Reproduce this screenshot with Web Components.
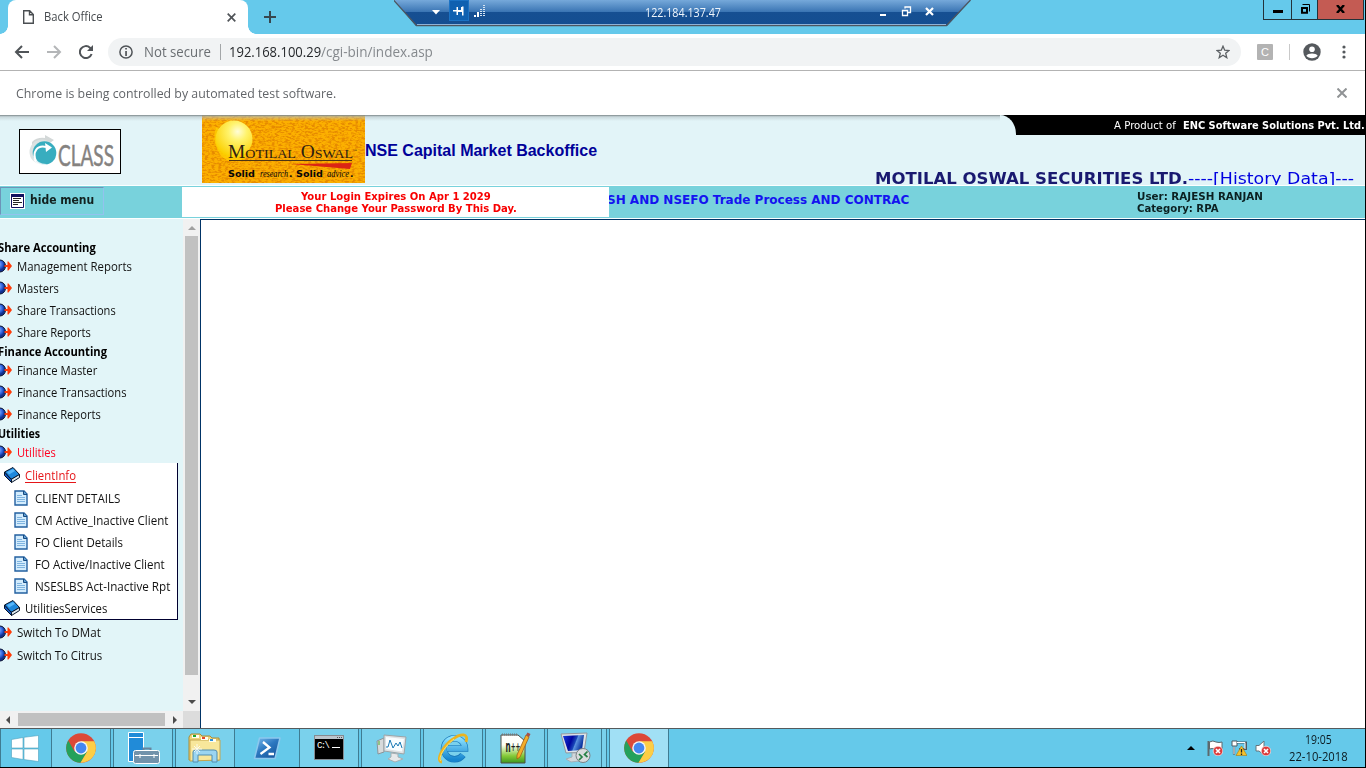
<!DOCTYPE html>
<html lang="en"><head><meta charset="utf-8"><title>Back Office</title>
<style>html,body{margin:0;height:100%;overflow:hidden;background:#000}</style></head>
<body><remote-desktop></remote-desktop>
<script>
const make = (name, html) => customElements.define(name, class extends HTMLElement {
  constructor() {
    super();
    this.attachShadow({mode: 'open'}).innerHTML = '<style>*{box-sizing:border-box}svg{display:block;flex:none}</style>' +
      (typeof html === 'function' ? html(this) : html);
  }
});

make('remote-desktop', `<style>
:host{display:flex;flex-direction:column;width:1366px;height:768px;border:solid #000;border-width:0 1px 1px 0;box-sizing:border-box;background:#fff;overflow:hidden;font:12px "Open Sans",sans-serif;color:#000;position:relative}
session-bar{position:absolute;left:394px;top:0}
</style>
<tab-strip></tab-strip><tool-bar></tool-bar><info-bar></info-bar><page-header></page-header><status-row></status-row><page-body></page-body><task-bar></task-bar><session-bar></session-bar>`);

make('session-bar', `<style>
:host{display:block;width:577px;height:27px;position:relative}
.bg{position:absolute;inset:0}
.pin{width:20px;height:21px;background:#0f60b0;border:1px solid #1b72c4;display:flex;align-items:center;justify-content:center}
</style>
<svg class="bg" width="577" height="27"><defs><linearGradient id="a" x2="0" y2="1"><stop offset="0" stop-color="#76a9da"/><stop offset=".46" stop-color="#3a74b3"/><stop offset=".461" stop-color="#164f92"/><stop offset="1" stop-color="#144e91"/></linearGradient></defs><path d="M0 0H577L553 26H22Z" fill="url(#a)"/><path d="M-.500 0L22.500 25.500H552.500L576.500 0" fill="none" stroke="#4d5660" stroke-width="1.3"/><path d="M23 24.500H552" stroke="#8fb2d6"/></svg>
<svg style="position:absolute;left:38px;top:10px" width="10" height="5"><path d="M0 0H8L4 4.500Z" fill="#fff"/></svg>
<div style="position:absolute;left:55px;top:0" class="pin"><svg style="margin-top:1px" width="12" height="12" fill="#fff"><path d="M0 5H3.500V2H5V5H8V2H9V1.500H10.500V10.500H9V7H5V10H3.500V6.500H0Z"/></svg></div>
<svg style="position:absolute;left:80px;top:5px" width="12" height="12" fill="#fff"><path d="M0 10h2v2H0zM3 7h2v5H3z"/><path fill="none" stroke="#d5e4f2" stroke-width="2" stroke-dasharray="1 1" d="M7 4V12M10 0V12"/></svg>
<fit-text w="76" style="position:absolute;left:251px;top:4px;line-height:18px;color:#eef5fc">122.184.137.47</fit-text>
<svg style="position:absolute;left:486px;top:6px" width="56" height="11"><path d="M0 8H6V10H0Z" fill="#fff"/><path d="M22.500 4.500H27.500V9.500H22.500ZM25 2.500V1H30.500V6.500H28" fill="none" stroke="#fff" stroke-width="1.300"/><path d="M46 2L53 9M53 2L46 9" stroke="#fff" stroke-width="2.200"/></svg>`);

make('tab-strip', `<style>
:host{display:flex;height:34px;background:#65c9eb;flex:none;position:relative}
.tab{position:relative;width:240px;height:34px;margin-left:8px;background:#fff;border-radius:8px 8px 0 0;display:flex;align-items:center;padding:0 10px 0 15px;color:#45494d}
.tab:before,.tab:after{content:"";position:absolute;bottom:0;width:8px;height:8px;background:radial-gradient(circle at 0 0,#65c9eb 7.500px,#fff 8px)}
.tab:before{left:-8px}.tab:after{right:-8px;background:radial-gradient(circle at 100% 0,#65c9eb 7.500px,#fff 8px)}
.plus{margin:11px 0 0 16px}
.win{margin-left:auto;display:flex;height:20px;margin-right:1px;border:1px solid #23323a;border-top:0}
.win div{display:flex;align-items:center;justify-content:center;border-left:1px solid #23323a}
</style>
<div class="tab"><svg width="11" height="14" fill="none" stroke="#4b4f52" stroke-width="1.400"><path d="M.700.700H6.700L10.300 4.500V13.300H.700ZM6.500 1V4.700H10"/></svg><fit-text w="59" style="margin:-1px 0 0 10px">Back Office</fit-text><svg style="margin-left:auto;margin-right:2px" width="9" height="9"><path d="M.700.700L8.300 8.300M8.300.700L.700 8.300" stroke="#505458" stroke-width="1.700"/></svg></div>
<svg class="plus" width="12" height="12"><path d="M6 0V12M0 6H12" stroke="#37474f" stroke-width="2"/></svg>
<div class="win"><div style="width:27px;border:0"><svg width="10" height="3" style="margin-top:4px"><path d="M0 0H10V3H0Z"/></svg></div><div style="width:26px"><svg width="11" height="10" style="margin:-2px 0 0 1px" fill="none" stroke="#000"><path stroke-width="2" d="M2 4H7V8.800H2Z"/><path d="M2.500.500H9.500V7.500"/></svg></div><div style="width:46px;background:#c45b53"><svg style="margin:-1px 0 0 0" width="9" height="8"><path d="M1 0L8 8M8 0L1 8" stroke="#000" stroke-width="2.400"/></svg></div></div>`);

make('tool-bar', `<style>
:host{display:flex;align-items:center;height:37px;flex:none;background:#fff;border-bottom:1px solid #b3b3b3;padding-left:14px}
.omni{display:flex;align-items:center;width:1133px;height:28px;border-radius:14px;background:#f1f3f4;margin-left:13px;font-size:14px;padding:0 11px;color:#6a6e72}
.omni i{width:1px;height:16px;background:#a3a6a8;margin:0 8px 0 9px}
.omni fit-text{margin-top:-1px}
.c{width:16px;height:16px;border-radius:1px;background:#b3b3b3;margin-left:16px;color:#fff;font:11px/16px "Liberation Sans";text-align:center}
.s{width:1px;height:16px;background:#c9c9c9;margin:0 13px 0 16px}
</style>
<svg width="16" height="14" fill="none" stroke="#505458" stroke-width="2"><path d="M15 7H2M8 1L2 7L8 13"/></svg>
<svg style="margin-left:16px" width="16" height="14" fill="none" stroke="#b4b6b8" stroke-width="2"><path d="M1 7H14M8 1L14 7L8 13"/></svg>
<svg style="margin-left:17px;margin-right:1px" width="15" height="14"><path d="M12.600 9A6 6 0 1 1 11 2.700L13 4.700" fill="none" stroke="#505458" stroke-width="2"/><path d="M14 0V6H8Z" fill="#505458"/></svg>
<div class="omni"><svg width="14" height="14"><circle cx="7" cy="7" r="6.100" fill="none" stroke="#505458" stroke-width="1.500"/><path d="M6.200 3h1.700v1.600H6.200zM6.200 6h1.700v5H6.200z" fill="#505458"/></svg><fit-text w="67" style="margin-left:11px">Not secure</fit-text><i></i><fit-text w="92" style="color:#25282b">192.168.100.29</fit-text><fit-text w="112" style="color:#85898d">/cgi-bin/index.asp</fit-text>
<svg style="margin-left:auto" width="14" height="14"><path d="M7 1.200L8.700 5.200L13 5.500L9.700 8.300L10.800 12.700L7 10.300L3.200 12.700L4.300 8.300L1 5.500L5.300 5.200Z" fill="none" stroke="#5b5f63" stroke-width="1.300"/></svg></div>
<div class="c">C</div><div class="s"></div>
<svg width="18" height="18"><circle cx="9" cy="9" r="8.700" fill="#55595d"/><circle cx="9" cy="6.200" r="2.800" fill="#fff"/><path d="M3.300 12.700C5 9.800 13 9.800 14.700 12.700C12.500 16 5.500 16 3.300 12.700Z" fill="#fff"/></svg>
<svg style="margin-left:21px" width="4" height="14" fill="#55595d"><circle cx="2" cy="2" r="1.600"/><circle cx="2" cy="7" r="1.600"/><circle cx="2" cy="12" r="1.600"/></svg>`);

make('info-bar', `<style>:host{display:flex;align-items:center;justify-content:space-between;height:44px;flex:none;padding:0 18px 0 16px;color:#626569;font-size:13px;background:#fff}</style><fit-text w="320">Chrome is being controlled by automated test software.</fit-text><svg width="10" height="10"><path d="M.500.500L9.500 9.500M9.500.500L.500 9.500" stroke="#909395" stroke-width="2"/></svg>`);

make('class-logo', `<style>:host{display:block;width:102px;height:45px;border:1px solid #000;background:#fff;box-sizing:border-box}</style>
<svg width="100" height="43"><path d="M12 12Q17 7 25 8V5L34 10L27 15Q18 10 12 16Z" fill="#d3d8d8"/><circle cx="22" cy="22" r="12.500" fill="#dde3e3"/><circle cx="24.500" cy="23" r="11.800" fill="#38adbf"/><path d="M16 31C12 22 17 15 26 17" fill="none" stroke="#fff" stroke-width="2"/><path d="M25 13L32 17.500L26 22Z" fill="#fff"/><path d="M13 25Q18 35 28 34Q20 38 14 31Z" fill="#fff" opacity=".8"/>
<text x="38" y="36" font-family="Lato" font-size="29" fill="#85827f" stroke="#85827f" stroke-width=".5" textLength="56" lengthAdjust="spacingAndGlyphs">CLASS</text></svg>`);

make('motilal-logo', `<style>:host{display:block;width:163px;height:68px}</style>
<svg width="163" height="68"><defs><radialGradient id="s" cx=".6" cy=".3" r=".7"><stop offset="0" stop-color="#fffdd8"/><stop offset=".35" stop-color="#fff36c"/><stop offset="1" stop-color="#fbd000"/></radialGradient><filter id="n" x="0" y="0" width="1" height="1" color-interpolation-filters="sRGB"><feTurbulence type="fractalNoise" baseFrequency=".3 .6" numOctaves="2" seed="3"/><feColorMatrix values="0 0 0 0 .85 0 0 0 0 .45 0 0 0 0 0 4 0 0 0 -1.700"/></filter></defs>
<rect width="163" height="68" fill="#fcb000"/><rect width="163" height="68" filter="url(#n)" opacity=".6"/>
<path d="M14 12Q9 28 20 42Q30 50 44 43L48 32Z" fill="#ffd000" opacity=".8"/><circle cx="32" cy="24" r="18.500" fill="url(#s)"/>
<g font-family="Liberation Serif" fill="#2d2110"><text x="26" y="43" font-size="18" textLength="125" lengthAdjust="spacingAndGlyphs">M<tspan font-size="13">OTILAL</tspan> O<tspan font-size="13">SWAL</tspan></text><text x="151" y="37" font-size="4">™</text></g>
<path d="M27 45.500H150" stroke="#4c3514"/><path d="M89 49L150 48L148 54Z" fill="#db2514"/>
<g fill="#080808"><text x="26" y="62" font-family="DejaVu Sans" font-weight="bold" font-size="9.500" textLength="27" lengthAdjust="spacingAndGlyphs">Solid</text><text x="58" y="62" font-family="Liberation Serif" font-style="italic" font-size="11" textLength="28" lengthAdjust="spacingAndGlyphs">research</text><text x="87" y="62" font-family="DejaVu Sans" font-weight="bold" font-size="9">.</text><text x="94" y="62" font-family="DejaVu Sans" font-weight="bold" font-size="9.500" textLength="27" lengthAdjust="spacingAndGlyphs">Solid</text><text x="125" y="62" font-family="Liberation Serif" font-style="italic" font-size="11" textLength="22" lengthAdjust="spacingAndGlyphs">advice</text><text x="148" y="62" font-family="DejaVu Sans" font-weight="bold" font-size="9">.</text></g></svg>`);

make('page-header', `<style>
:host{display:flex;height:70px;flex:none;background:#e2f4f8;position:relative;overflow:hidden}
class-logo{margin:14px 81px 0 19px;flex:none}motilal-logo{flex:none}
h1{margin:26px 0 0;font:bold 16px/20px "Liberation Sans",sans-serif;color:#000099}
.r{margin-left:auto;display:flex;flex-direction:column;align-items:flex-end;font-family:"DejaVu Sans",sans-serif}
.p{width:365px;height:20px;background:#000;color:#fff;display:flex;justify-content:flex-end;gap:7px;font-size:10px;line-height:22px;position:relative}
.p:before{content:"";position:absolute;left:0;top:0;width:16px;height:20px;background:#e2f4f8;border-radius:0 16px 0 0/0 19px 0 0}
.m{font-size:16px;line-height:22px;height:22px;margin:33px 11px 0 0;color:#0000e0;display:flex}
.m b{color:#191970}
.sh{position:absolute;left:0;width:1000px;top:0;height:6px;background:linear-gradient(#7b8588,#b7c4c899 30%,transparent)}
</style><class-logo></class-logo><motilal-logo></motilal-logo><h1><fit-text w="232">NSE Capital Market Backoffice</fit-text></h1>
<div class="r"><div class="p"><fit-text w="62">A Product of</fit-text><fit-text w="182"><b>ENC Software Solutions Pvt. Ltd.</b></fit-text></div><div class="m"><fit-text w="313"><b>MOTILAL OSWAL SECURITIES LTD.</b></fit-text><fit-text w="166">----[History Data]---</fit-text></div></div><div class="sh"></div>`);

make('status-row', `<style>
:host{display:flex;height:34px;flex:none;background:#78d2dc;border:solid #fbffff;border-width:1px 0;box-sizing:border-box;font:bold 10px/12px "DejaVu Sans",sans-serif}
.h{width:104px;height:28px;margin-top:1px;border:1px solid;border-color:#6c94b8 #93c2ee #93c2ee #6c94b8;display:flex;align-items:center;padding-left:9px;gap:5px;font-size:12px;color:#12211f}
.w{margin:1px 0 0 78px;width:427px;height:30px;background:#fff;color:#f80000;display:flex;flex-direction:column;align-items:center;padding-top:4px}
.q{width:302px;overflow:hidden;color:#1414f0;font-size:12px;line-height:28px;display:flex}
.u{margin-left:226px;padding-top:5px;display:flex;flex-direction:column;color:#0b2021}
</style>
<div class="h"><svg width="15" height="16"><path d="M0 0H15V16H0Z" fill="#fff"/><path d="M1.500 1.500H13.500V14.500H1.500Z" fill="#fff" stroke="#11115f"/><path d="M1 1h13v3H1z" fill="#11115f"/><path d="M3 5.500H11M3 7.500H9M3 9.500H12M3 11.500H8" stroke="#222"/></svg><fit-text w="64" style="margin-top:-2px">hide menu</fit-text></div>
<div class="w"><fit-text w="190">Your Login Expires On Apr 1 2029</fit-text><fit-text w="242">Please Change Your Password By This Day.</fit-text></div>
<div class="q"><fit-text w="302" style="margin-left:-2px">SH AND NSEFO Trade Process AND CONTRAC</fit-text></div>
<div class="u"><fit-text w="126">User: RAJESH RANJAN</fit-text><fit-text w="81">Category: RPA</fit-text></div>`);

const glyphs = {
  ball: '<svg style="margin:-2px -2px 0 0" width="14" height="14"><defs><radialGradient id="g" cx=".4" cy=".35"><stop offset="0" stop-color="#8db8ff"/><stop offset=".65" stop-color="#2f62de"/><stop offset="1" stop-color="#12308f"/></radialGradient></defs><ellipse cx="0" cy="7" rx="5.500" ry="6" fill="url(#g)" stroke="#0b1230"/><path d="M4.500 6h3V2.500h1L12 7L8.500 11.500H7.500V8h-3Z" fill="#ff3b08"/></svg>',
  book: '<svg style="margin-top:-2px" width="18" height="18"><path d="M1.500 6L10 1.500L16.500 8.500L8 13.500Z" fill="#1e88dd" stroke="#06142a"/><path d="M8 13.500L16.500 8.500V11.500L8.500 16.500Z" fill="#dfe9ee" stroke="#06142a"/><path d="M1.500 6V9.500L8.500 16.500V13.500Z" fill="#1456b8" stroke="#06142a"/><path d="M4 6L10 3L12 5L6 8.500Z" fill="#57b6fa"/></svg>',
  page: '<svg width="14" height="16"><path d="M1 1H10L13 4V15H1Z" fill="#d3ecfd" stroke="#2360a0" stroke-width="1.400"/><path d="M9.500 1V4.500H13" fill="#5d9dd0" stroke="#174a80"/><path d="M3 5.500H8M3 7.500H11M3 9.500H11M3 11.500H11" stroke="#7fb4e0"/></svg>'
};
make('menu-item', e => `<style>
:host{display:flex;align-items:center;height:22px;line-height:22px;gap:5px;color:#111;font-size:12px;flex:none;width:max-content}
:host([icon=book]){padding-left:3px;gap:4px}:host([icon=page]){padding-left:14px;gap:7px}:host([icon=page]) svg{margin-top:-2px}
:host([red]){color:#ff0020}:host([line]){color:#e51518}:host([line]) u{display:block;height:15px;line-height:15px;border-bottom:1px solid #e51518;margin-top:-1px}u{text-decoration:none}
</style>${glyphs[e.getAttribute('icon')] || glyphs.ball}<u><fit-text w="${e.getAttribute('w')}">${e.textContent}</fit-text></u>`);

make('side-menu', `<style>
:host{display:grid;grid-template:492px 17px/183px 17px;width:200px;height:509px;background:#e2f5f8;flex:none;font-family:"Open Sans"}
nav{overflow:hidden;padding-top:20px;display:flex;flex-direction:column}
h2{margin:0 0 0 -2px;font-size:12px;height:16px;line-height:16px;flex:none}
.b{width:178px;height:157px;flex:none;background:#fff;border:solid #000030;border-width:0 1px 1px 0;padding-top:2px;margin-bottom:2px}
.v,.z{background:#f1f1f1;display:flex;align-items:center;justify-content:space-between}
.v{flex-direction:column;padding:7px 0}.v i{width:13px;height:439px;background:#c1c1c1;margin:-4px 0 0 0}
.z{padding:0 5px 0 5px}.z i{height:13px;width:147px;background:#c1c1c1;}
.k{background:#dcdcdc}
</style><nav><h2 style="height:17px;line-height:18px"><fit-text w="98">Share Accounting</fit-text></h2>
<menu-item w="115">Management Reports</menu-item><menu-item w="42">Masters</menu-item><menu-item w="99">Share Transactions</menu-item><menu-item w="74">Share Reports</menu-item>
<h2><fit-text w="109">Finance Accounting</fit-text></h2><menu-item w="80">Finance Master</menu-item><menu-item w="110">Finance Transactions</menu-item><menu-item w="84">Finance Reports</menu-item>
<h2><fit-text w="42">Utilities</fit-text></h2><menu-item red w="39" style="height:21px">Utilities</menu-item>
<div class="b"><menu-item icon="book" line w="51">ClientInfo</menu-item><menu-item icon="page" w="85" style="margin-top:1px">CLIENT DETAILS</menu-item><menu-item icon="page" w="133">CM Active_Inactive Client</menu-item><menu-item icon="page" w="88">FO Client Details</menu-item><menu-item icon="page" w="130">FO Active/Inactive Client</menu-item><menu-item icon="page" w="135">NSESLBS Act-Inactive Rpt</menu-item><menu-item icon="book" w="82">UtilitiesServices</menu-item></div>
<menu-item w="84">Switch To DMat</menu-item><menu-item w="85" style="margin-top:1px">Switch To Citrus</menu-item></nav>
<div class="v"><svg width="8" height="4"><path d="M0 4L4 0L8 4Z" fill="#a0a0a0"/></svg><i></i><svg style="margin-top:15px" width="8" height="4"><path d="M0 0L4 4L8 0Z" fill="#4c4c4c"/></svg></div>
<div class="z"><svg width="5" height="8"><path d="M5 0L1 4L5 8Z" fill="#4c4c4c"/></svg><i></i><svg width="5" height="8"><path d="M0 0L4 4L0 8Z" fill="#4c4c4c"/></svg></div><div class="k"></div>`);

make('page-body', `<style>:host{display:flex;height:509px;flex:none}main{flex:1;background:#fff;border:solid #003366;border-width:1px 0 0 1px}</style><side-menu></side-menu><main></main>`);

const chrome = '<svg width="30" height="30" viewBox="0 0 30 30"><circle cx="15" cy="15" r="14.800" fill="#dc4938"/><path d="M2.200 7.500A14.800 14.800 0 0 0 14.500 29.800L21.400 18.500L15 15L8.500 18.500Z" fill="#24a15b"/><path d="M15 8.200H28.200A14.800 14.800 0 0 1 14.500 29.800L21.200 18.500Z" fill="#fdce45"/><circle cx="15" cy="15" r="6.800" fill="#f6f6f6"/><circle cx="15" cy="15" r="5.400" fill="#4587f0"/></svg>';
const apps = {
  start: '<svg width="28" height="27" fill="#fff" stroke="#4fa1bd" stroke-width=".6"><path d="M.500 4.500L12 2.500V13H.500ZM13 2.300L27.500.500V13H13ZM.500 14H12V24.500L.500 22.500ZM13 14H27.500V26.500L13 24.600Z"/></svg>',
  chrome,
  server: '<svg width="34" height="33" stroke="#fff"><path d="M2.500.500H17.500V29.500H2.500Z" fill="#218bd8"/><path d="M2 5.500H18"/><path d="M17.500 19V16.500H24.500V19" fill="none" stroke="#68869f" stroke-width="2"/><rect x="7.500" y="18.500" width="26" height="13" rx="2" fill="#7192ab"/><path d="M9 23.500H32M14 22V26M28 22V26"/></svg>',
  folder: '<svg width="34" height="32"><path d="M1 5L3 2H12L14 4H22L24 6H31V28H1Z" fill="#efd57c" stroke="#a98c39"/><path d="M2 8H32V28L2 29Z" fill="#f8e79b" stroke="#c3a54e"/><path d="M4 3H11V6H4ZM13 5H20V8H13ZM21 7H28V10H21Z" fill="#fffef1"/><path d="M5 3h3v2H5z" fill="#1da431"/><path d="M14 5h3v2H14z" fill="#e5482c"/><path d="M22 7h3v2H22z" fill="#2a8edc"/><path d="M5 20Q5 18 8 18H26Q29 18 29 20V30H24V23H10V30H5Z" fill="#9bd5f1" stroke="#518eb0"/><path d="M9 12V22M4 17H14M6 14L12 20M12 14L6 20" stroke="#fff" opacity=".8"/></svg>',
  shell: '<svg width="30" height="26"><defs><linearGradient id="p" x2=".8" y2="1"><stop stop-color="#7dbdf0"/><stop offset=".5" stop-color="#2c78c0"/><stop offset="1" stop-color="#16549a"/></linearGradient></defs><path d="M7.500 3H28L23 23.500H2.500Z" fill="url(#p)" stroke="#8cc8ee" stroke-width="1.500" stroke-linejoin="round"/><path d="M11 7L17.500 12.500L8.500 19M16.500 19H22" fill="none" stroke="#fff" stroke-width="2.300"/></svg>',
  cmd: '<svg width="30" height="26"><path d="M.500.500H29.500V24.500H.500Z" fill="#000" stroke="#868b91"/><path d="M1 1h28v3H1z" fill="#bcc5cc"/><path d="M23 2h1v1h-1zM25 2h1v1h-1zM27 2h1v1h-1z" fill="#555"/><text x="3" y="13" font-family="Liberation Mono" font-size="9" fill="#fff" textLength="13">C:\\</text><path d="M18 12.500H26" stroke="#fff"/></svg>',
  perf: '<svg width="31" height="29"><path d="M1 7L8 4V18L2 20Z" fill="#d7dadb" stroke="#8b9499"/><path d="M8 1L30 3L28 20L8 17Z" fill="#dfe2e4" stroke="#9ca4a8"/><path d="M10 3L28 5L26 17.500L10 15Z" fill="#f8fdff"/><path d="M10 13L12 13L14 6L17 14L20 9L22 12L24 8L26 14" fill="none" stroke="#1979b5"/><path d="M15 19L22 20V23L27 25L19 28L12 25L15 23Z" fill="#e7e8e9" stroke="#a8afb2"/><path d="M2 8h2M2 10h2" stroke="#4cab2b"/></svg>',
  ie: '<svg width="31" height="31"><defs><linearGradient id="e" x2="0" y2="1"><stop stop-color="#8be1ff"/><stop offset="1" stop-color="#1786cf"/></linearGradient></defs><path d="M25 22A10.500 10.500 0 1 1 27 15.500H9" fill="none" stroke="#1776b7" stroke-width="6.500"/><path d="M25 22A10.500 10.500 0 1 1 27 15.500H9" fill="none" stroke="url(#e)" stroke-width="5.300"/><path d="M4 29C-3 28 5 13 15 6C23 0 31 0 28 9" fill="none" stroke="#eab420" stroke-width="2.800"/><path d="M3 28C-1 25 8 12 16 6" fill="none" stroke="#ffe36c"/></svg>',
  npp: '<svg width="31" height="32"><defs><linearGradient id="n" x2="0" y2="1"><stop stop-color="#fff"/><stop offset=".35" stop-color="#fcfff6"/><stop offset=".75" stop-color="#84c936"/><stop offset="1" stop-color="#3c9620"/></linearGradient></defs><path d="M1 3H18L25 9V31H1Z" fill="url(#n)" stroke="#4c4e47"/><path d="M2 2.500H18" stroke="#777" stroke-width="2" stroke-dasharray="1 1"/><text font-family="DejaVu Sans" font-weight="bold" fill="#202020" font-size="10" transform="translate(5.500 20) scale(.72 1.500)">n<tspan font-size="8" dy="-1">++</tspan></text><path d="M26 3L29 5L20 25L17 27V23Z" fill="#f4ae2a" stroke="#9e6017" stroke-width=".8"/><path d="M26 3L27.500.500L30.500 2L29 5Z" fill="#a75149"/></svg>',
  rdp: '<svg style="margin-right:5px" width="32" height="32"><defs><linearGradient id="r" x2="1" y2=".3"><stop stop-color="#173ddd"/><stop offset=".45" stop-color="#0005a0"/><stop offset=".65" stop-color="#1a48b8"/><stop offset=".7" stop-color="#5b92e0"/><stop offset="1" stop-color="#0b35a0"/></linearGradient></defs><path d="M2 2L28 1L25 20L7 21Z" fill="#dce2e7" stroke="#9299a0"/><path d="M4 4L25 3L23 18L9 19Z" fill="url(#r)"/><path d="M13 21L18 21V25L20 29L12 30L7 27L13 25Z" fill="#d2d8dc" stroke="#a7afb5"/><circle cx="24" cy="23.500" r="7" fill="#d9dcdd" stroke="#7b8083"/><path d="M20 22L23 25L20 28M28.500 19.500L25.500 22.500L28.500 25" fill="none" stroke="#268044" stroke-width="1.700"/></svg>'
};
make('task-button', e => `<style>
:host{display:flex;width:60px;height:38px;align-items:center;justify-content:center;background:#7ad1ec;border:solid #3f7c92;border-width:0 1px;box-sizing:border-box;position:relative;flex:none}
:host([plain]){background:none;border:0}:host([active]){background:#a1e0f5}
:host([stack]):after{content:"";position:absolute;right:4px;top:0;bottom:0;width:1px;background:#3f7c92}
</style>${apps[e.getAttribute('app')]}`);

const bad = '<circle cx="11" cy="11" r="4.800" fill="#dc3c3c" stroke="#fff" stroke-width=".6"/><path d="M9 9L13 13M13 9L9 13" stroke="#fff" stroke-width="1.600"/>';
make('task-bar', `<style>
:host{display:flex;height:39px;flex:none;background:#65c9ea;border-top:1px solid #555a5c;box-sizing:border-box;align-items:center;gap:2px}
.t{margin-left:auto;display:flex;align-items:center;gap:8px}
.c{width:76px;display:flex;flex-direction:column;align-items:center;line-height:17px;color:#0b1a20;margin-right:9px;margin-left:1px}
</style><task-button app="start" plain style="width:49px;border-left:1px solid #3f7c92"></task-button><task-button app="chrome"></task-button><task-button app="server"></task-button><task-button app="folder"></task-button><task-button app="shell" plain></task-button><task-button app="cmd"></task-button><task-button app="perf"></task-button><task-button app="ie"></task-button><task-button app="npp"></task-button><task-button app="rdp" stack></task-button><task-button app="chrome" active></task-button>
<div class="t"><svg style="margin-right:4px" width="8" height="4"><path d="M0 4L4 0L8 4Z"/></svg>
<svg width="16" height="16"><path d="M1.500 1V16" stroke="#5d686d" stroke-width="2"/><path d="M2.500 2Q6 0 9 2Q12 3 15 2V10Q11 11 8 9Q5 8 2.500 9Z" fill="#fff" stroke="#5d686d"/>${bad}</svg>
<svg width="16" height="16"><path d="M4 2.500H15V9H8M3 7V14.500" fill="none" stroke="#4d5960" stroke-width="2.200"/><path d="M1 1H6V6H1Z" fill="#fff" stroke="#4d5960"/><path d="M3 7V14M6 2.500H14V9" fill="none" stroke="#fff"/><path d="M10.500 6L16 15.500H5Z" fill="#f7c12b" stroke="#a47a11" stroke-width=".6"/><path d="M10.500 9V12.500M10.500 13.500V15" stroke="#222" stroke-width="1.300"/></svg>
<svg width="16" height="16"><path d="M1 5.500H4L9 1V15L4 11H1Z" fill="#fff" stroke="#67747b"/>${bad}</svg>
<div class="c"><fit-text w="27">19:05</fit-text><fit-text w="59">22-10-2018</fit-text></div></div>`);

/* A line of text squeezed or widened to a given width in pixels. */
customElements.define('fit-text', class extends HTMLElement {
  constructor() {
    super();
    this.attachShadow({mode: 'open'}).innerHTML = '<style>:host{display:block;white-space:pre;flex:none}span{display:inline-block;transform-origin:0 50%}</style><span><slot></slot></span>';
  }
  connectedCallback() {
    const w = +this.getAttribute('w'), s = this.shadowRoot.querySelector('span');
    s.style.transform = `scaleX(${w / s.offsetWidth})`;
    this.style.width = w + 'px';
  }
});
</script></body></html>
